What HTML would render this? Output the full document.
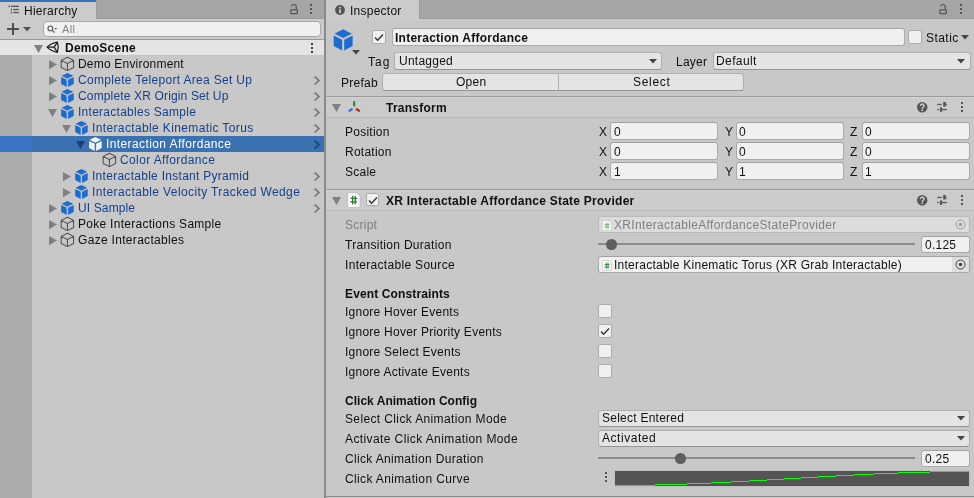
<!DOCTYPE html>
<html><head><meta charset="utf-8">
<style>
*{box-sizing:border-box;margin:0;padding:0}
html,body{width:974px;height:498px;overflow:hidden;background:#c8c8c8}
body{position:relative;font-family:"Liberation Sans",sans-serif;font-size:12px;color:#101010}
#root{position:absolute;left:0;top:0;width:974px;height:498px;will-change:transform}
.a{position:absolute}
.t{position:absolute;white-space:pre;line-height:16px;font-size:12px;letter-spacing:0.25px}
.b{font-weight:bold}
.blue{color:#13418f}
.fld{position:absolute;background:#f0f0f0;border:1px solid #aaaaaa;border-top-color:#a2a2a2;border-radius:3px}
.btn{position:absolute;background:#e4e4e4;border:1px solid #b0b0b0;border-bottom-color:#959595;border-radius:3px}
.cb{position:absolute;width:14px;height:14px;background:#f0f0f0;border:1px solid #ababab;border-radius:2px}
.sep{position:absolute;left:326px;width:648px;height:1px;background:#999}
</style></head><body><div id="root">
<svg width="0" height="0" style="position:absolute">
 <defs>
  <g id="cubeB" fill="#1b6bd2"><path d="M7.4 0.9L13.2 3.8L7.4 6.7L1.6 3.8Z"/><path d="M1.1 5L6.7 7.8V15L1.1 12Z"/><path d="M13.7 5L8.1 7.8V15L13.7 12Z"/></g>
  <g id="cubeW" fill="#f2f2f2"><path d="M7.4 0.9L13.2 3.8L7.4 6.7L1.6 3.8Z"/><path d="M1.1 5L6.7 7.8V15L1.1 12Z"/><path d="M13.7 5L8.1 7.8V15L13.7 12Z"/></g>
  <g id="cubeO"><path d="M7.4 1.3L13.6 4.4V11.5L7.4 14.6 1.2 11.5V4.4Z M1.2 4.4L7.4 7.5L13.6 4.4M7.4 7.5V14.6" fill="none" stroke="#505050" stroke-width="1.05" stroke-linejoin="round"/></g>
 </defs>
</svg>

<div class="a" style="left:0;top:0;width:974px;height:19px;background:#a5a5a5"></div>
<div class="a" style="left:0;top:0;width:96px;height:19px;background:#cbcbcb"></div>
<div class="a" style="left:0;top:0;width:96px;height:2px;background:#3a70bc"></div>
<div class="a" style="left:326px;top:0;width:93px;height:19px;background:#cbcbcb"></div>
<div class="a" style="left:96px;top:18px;width:230px;height:1px;background:#9c9c9c"></div>
<div class="a" style="left:419px;top:18px;width:555px;height:1px;background:#9c9c9c"></div>
<div class="a" style="left:96px;top:0;width:1px;height:19px;background:#9e9e9e"></div>
<div class="a" style="left:419px;top:0;width:1px;height:19px;background:#9e9e9e"></div>
<svg class="a" style="left:4px;top:2px" width="16" height="14" viewBox="0 0 16 14"><g fill="#555">
<path d="M4.2 4.3L5.8 2.9V5.7Z"/><rect x="7" y="3.7" width="7.8" height="1.3"/>
<path d="M6.4 7.5L8 6.2V8.9Z"/><rect x="9.2" y="6.9" width="5.6" height="1.3"/>
<path d="M6.4 10.5L8 9.2V11.9Z"/><rect x="9.2" y="9.9" width="5.6" height="1.3"/>
<rect x="7.1" y="5.5" width="0.6" height="5" fill="#888"/></g></svg>
<div class="t " style="left:24px;top:3px;">Hierarchy</div>
<svg class="a" style="left:289px;top:3px" width="11" height="12" viewBox="0 0 11 12"><path d="M7.3 6.5V4A2.5 2.5 0 0 0 2.4 3.3" fill="none" stroke="#555" stroke-width="1.2"/><rect x="1.8" y="6.9" width="6.6" height="3.7" rx="0.5" fill="none" stroke="#555" stroke-width="1.2"/></svg>
<svg class="a" style="left:310px;top:4px" width="2" height="10" viewBox="0 0 2 10"><g fill="#555"><rect x="0" y="0" width="2" height="2"/><rect x="0" y="4" width="2" height="2"/><rect x="0" y="8" width="2" height="2"/></g></svg>
<svg class="a" style="left:335px;top:5px" width="10" height="10" viewBox="0 0 10 10"><circle cx="5" cy="5" r="4.9" fill="#555"/><rect x="4.1" y="4.2" width="1.8" height="4" fill="#cbcbcb"/><rect x="4.1" y="1.8" width="1.8" height="1.6" fill="#cbcbcb"/></svg>
<div class="t " style="left:350px;top:3px;">Inspector</div>
<svg class="a" style="left:938px;top:3px" width="11" height="12" viewBox="0 0 11 12"><path d="M7.3 6.5V4A2.5 2.5 0 0 0 2.4 3.3" fill="none" stroke="#555" stroke-width="1.2"/><rect x="1.8" y="6.9" width="6.6" height="3.7" rx="0.5" fill="none" stroke="#555" stroke-width="1.2"/></svg>
<svg class="a" style="left:960px;top:4px" width="2" height="10" viewBox="0 0 2 10"><g fill="#555"><rect x="0" y="0" width="2" height="2"/><rect x="0" y="4" width="2" height="2"/><rect x="0" y="8" width="2" height="2"/></g></svg>
<div class="a" style="left:0;top:19px;width:324px;height:20px;background:#cbcbcb"></div>
<div class="a" style="left:0;top:39px;width:324px;height:1px;background:#999"></div>
<svg class="a" style="left:7px;top:23px" width="12" height="12" viewBox="0 0 12 12"><g fill="#444"><rect x="5.1" y="0" width="1.8" height="12"/><rect x="0" y="5.1" width="12" height="1.8"/></g></svg>
<svg class="a" style="left:23px;top:27px" width="8" height="5" viewBox="0 0 8 5"><path d="M0 0H8L4 4.6Z" fill="#555"/></svg>
<div class="fld" style="left:43px;top:21px;width:278px;height:16px;border-radius:4px;border-color:#a8a8a8"></div>
<svg class="a" style="left:47px;top:25px" width="11" height="9" viewBox="0 0 11 9"><circle cx="3.4" cy="3.4" r="2.4" fill="none" stroke="#555" stroke-width="1.1"/><path d="M5.1 5.2L7.6 7.7" stroke="#555" stroke-width="1.2"/><path d="M7.5 2.9H10L8.75 4.8Z" fill="#555"/></svg>
<div class="t " style="left:62px;top:20.5px;color:#858585;font-size:11px;letter-spacing:0.3px">All</div>
<div class="a" style="left:0;top:40px;width:324px;height:15px;background:#e4e4e4"></div>
<div class="a" style="left:0;top:55px;width:324px;height:1px;background:#c4c4c4"></div>
<div class="a" style="left:0;top:55px;width:32px;height:443px;background:#acacac"></div>
<div class="a" style="left:0;top:136px;width:32px;height:16px;background:#3b74c6"></div>
<div class="a" style="left:32px;top:136px;width:292px;height:16px;background:#3a71b1"></div>
<svg class="a" style="left:34px;top:45px" width="9" height="8" viewBox="0 0 9 8"><path d="M0 0H9L4.5 8Z" fill="#808080"/></svg>
<svg class="a" style="left:44px;top:39px" width="16" height="16" viewBox="0 0 16 16"><g fill="none" stroke="#222" stroke-width="1.25" stroke-linejoin="round"><path d="M3.1 8.2Q6.6 4.3 13.4 3.1Q15.1 8.2 13.4 13.3Q6.6 12.1 3.1 8.2Z"/><path d="M3.1 8.2H10.2L13.4 3.1M10.2 8.2L13.4 13.3"/></g></svg>
<div class="t b" style="left:65px;top:40px;">DemoScene</div>
<svg class="a" style="left:311px;top:43px" width="2" height="10" viewBox="0 0 2 10"><g fill="#444"><rect x="0" y="0" width="2" height="2"/><rect x="0" y="4" width="2" height="2"/><rect x="0" y="8" width="2" height="2"/></g></svg>
<svg class="a" style="left:49px;top:60px" width="8" height="10" viewBox="0 0 8 10"><path d="M0 0L8 4.6L0 9.2Z" fill="#808080"/></svg>
<svg class="a" style="left:60px;top:56px" width="15" height="16" viewBox="0 0 15 16"><use href="#cubeO"/></svg>
<div class="t " style="left:78px;top:56px;letter-spacing:0.2px">Demo Environment</div>
<svg class="a" style="left:49px;top:76px" width="8" height="10" viewBox="0 0 8 10"><path d="M0 0L8 4.6L0 9.2Z" fill="#808080"/></svg>
<svg class="a" style="left:60px;top:72px" width="15" height="16" viewBox="0 0 15 16"><use href="#cubeB"/></svg>
<div class="t blue" style="left:78px;top:72px;letter-spacing:0.31px">Complete Teleport Area Set Up</div>
<svg class="a" style="left:313px;top:76px" width="8" height="10" viewBox="0 0 8 10"><path d="M1.5 0.5L6 4.6L1.5 8.7" fill="none" stroke="#7a7a7a" stroke-width="1.7"/></svg>
<svg class="a" style="left:49px;top:92px" width="8" height="10" viewBox="0 0 8 10"><path d="M0 0L8 4.6L0 9.2Z" fill="#808080"/></svg>
<svg class="a" style="left:60px;top:88px" width="15" height="16" viewBox="0 0 15 16"><use href="#cubeB"/></svg>
<div class="t blue" style="left:78px;top:88px;letter-spacing:0.15px">Complete XR Origin Set Up</div>
<svg class="a" style="left:313px;top:92px" width="8" height="10" viewBox="0 0 8 10"><path d="M1.5 0.5L6 4.6L1.5 8.7" fill="none" stroke="#7a7a7a" stroke-width="1.7"/></svg>
<svg class="a" style="left:48px;top:109px" width="9" height="8" viewBox="0 0 9 8"><path d="M0 0H9L4.5 8Z" fill="#808080"/></svg>
<svg class="a" style="left:60px;top:104px" width="15" height="16" viewBox="0 0 15 16"><use href="#cubeB"/></svg>
<div class="t blue" style="left:78px;top:104px;letter-spacing:0.27px">Interactables Sample</div>
<svg class="a" style="left:313px;top:108px" width="8" height="10" viewBox="0 0 8 10"><path d="M1.5 0.5L6 4.6L1.5 8.7" fill="none" stroke="#7a7a7a" stroke-width="1.7"/></svg>
<svg class="a" style="left:62px;top:125px" width="9" height="8" viewBox="0 0 9 8"><path d="M0 0H9L4.5 8Z" fill="#808080"/></svg>
<svg class="a" style="left:74px;top:120px" width="15" height="16" viewBox="0 0 15 16"><use href="#cubeB"/></svg>
<div class="t blue" style="left:92px;top:120px;letter-spacing:0.37px">Interactable Kinematic Torus</div>
<svg class="a" style="left:313px;top:124px" width="8" height="10" viewBox="0 0 8 10"><path d="M1.5 0.5L6 4.6L1.5 8.7" fill="none" stroke="#7a7a7a" stroke-width="1.7"/></svg>
<svg class="a" style="left:76px;top:141px" width="9" height="8" viewBox="0 0 9 8"><path d="M0 0H9L4.5 8Z" fill="#1e3e6c"/></svg>
<svg class="a" style="left:88px;top:136px" width="15" height="16" viewBox="0 0 15 16"><use href="#cubeW"/></svg>
<div class="t " style="left:106px;top:136px;color:#ffffff;letter-spacing:0.4px">Interaction Affordance</div>
<svg class="a" style="left:313px;top:140px" width="8" height="10" viewBox="0 0 8 10"><path d="M1.5 0.5L6 4.6L1.5 8.7" fill="none" stroke="#1f4474" stroke-width="1.7"/></svg>
<svg class="a" style="left:102px;top:152px" width="15" height="16" viewBox="0 0 15 16"><use href="#cubeO"/></svg>
<div class="t blue" style="left:120px;top:152px;letter-spacing:0.38px">Color Affordance</div>
<svg class="a" style="left:63px;top:172px" width="8" height="10" viewBox="0 0 8 10"><path d="M0 0L8 4.6L0 9.2Z" fill="#808080"/></svg>
<svg class="a" style="left:74px;top:168px" width="15" height="16" viewBox="0 0 15 16"><use href="#cubeB"/></svg>
<div class="t blue" style="left:92px;top:168px;letter-spacing:0.28px">Interactable Instant Pyramid</div>
<svg class="a" style="left:313px;top:172px" width="8" height="10" viewBox="0 0 8 10"><path d="M1.5 0.5L6 4.6L1.5 8.7" fill="none" stroke="#7a7a7a" stroke-width="1.7"/></svg>
<svg class="a" style="left:63px;top:188px" width="8" height="10" viewBox="0 0 8 10"><path d="M0 0L8 4.6L0 9.2Z" fill="#808080"/></svg>
<svg class="a" style="left:74px;top:184px" width="15" height="16" viewBox="0 0 15 16"><use href="#cubeB"/></svg>
<div class="t blue" style="left:92px;top:184px;letter-spacing:0.39px">Interactable Velocity Tracked Wedge</div>
<svg class="a" style="left:313px;top:188px" width="8" height="10" viewBox="0 0 8 10"><path d="M1.5 0.5L6 4.6L1.5 8.7" fill="none" stroke="#7a7a7a" stroke-width="1.7"/></svg>
<svg class="a" style="left:49px;top:204px" width="8" height="10" viewBox="0 0 8 10"><path d="M0 0L8 4.6L0 9.2Z" fill="#808080"/></svg>
<svg class="a" style="left:60px;top:200px" width="15" height="16" viewBox="0 0 15 16"><use href="#cubeB"/></svg>
<div class="t blue" style="left:78px;top:200px;letter-spacing:0.125px">UI Sample</div>
<svg class="a" style="left:313px;top:204px" width="8" height="10" viewBox="0 0 8 10"><path d="M1.5 0.5L6 4.6L1.5 8.7" fill="none" stroke="#7a7a7a" stroke-width="1.7"/></svg>
<svg class="a" style="left:49px;top:220px" width="8" height="10" viewBox="0 0 8 10"><path d="M0 0L8 4.6L0 9.2Z" fill="#808080"/></svg>
<svg class="a" style="left:60px;top:216px" width="15" height="16" viewBox="0 0 15 16"><use href="#cubeO"/></svg>
<div class="t " style="left:78px;top:216px;letter-spacing:0.28px">Poke Interactions Sample</div>
<svg class="a" style="left:49px;top:236px" width="8" height="10" viewBox="0 0 8 10"><path d="M0 0L8 4.6L0 9.2Z" fill="#808080"/></svg>
<svg class="a" style="left:60px;top:232px" width="15" height="16" viewBox="0 0 15 16"><use href="#cubeO"/></svg>
<div class="t " style="left:78px;top:232px;letter-spacing:0.31px">Gaze Interactables</div>
<div class="a" style="left:324px;top:0;width:2px;height:498px;background:#8a8a8a"></div>
<svg class="a" style="left:332px;top:28px" width="22.6" height="24" viewBox="0 0 15 16"><use href="#cubeB"/></svg>
<svg class="a" style="left:352px;top:50px" width="8" height="5" viewBox="0 0 8 5"><path d="M0 0H8L4 4.6Z" fill="#444"/></svg>
<div class="cb" style="left:372px;top:30px"></div>
<svg class="a" style="left:374px;top:33px" width="10" height="9" viewBox="0 0 10 9"><path d="M1 4.6l2.6 2.6L9 1.6" fill="none" stroke="#333" stroke-width="1.4"/></svg>
<div class="fld" style="left:392px;top:28px;width:513px;height:18px"></div>
<div class="t b" style="left:395px;top:30px;">Interaction Affordance</div>
<div class="cb" style="left:908px;top:30px"></div>
<div class="t " style="left:926px;top:30px;letter-spacing:0.45px">Static</div>
<svg class="a" style="left:961px;top:35px" width="8" height="5" viewBox="0 0 8 5"><path d="M0 0H8L4 4.6Z" fill="#444"/></svg>
<div class="t " style="left:368px;top:54px;letter-spacing:1px">Tag</div>
<div class="btn" style="left:394px;top:52px;width:268px;height:18px"></div>
<div class="t " style="left:399px;top:53px;">Untagged</div>
<svg class="a" style="left:649px;top:59px" width="8" height="5" viewBox="0 0 8 5"><path d="M0 0H8L4 4.6Z" fill="#444"/></svg>
<div class="t " style="left:676px;top:54px;">Layer</div>
<div class="btn" style="left:713px;top:52px;width:258px;height:18px"></div>
<div class="t " style="left:716px;top:53px;letter-spacing:0.4px">Default</div>
<svg class="a" style="left:957px;top:59px" width="8" height="5" viewBox="0 0 8 5"><path d="M0 0H8L4 4.6Z" fill="#444"/></svg>
<div class="t " style="left:341px;top:75px;">Prefab</div>
<div class="btn" style="left:382px;top:73px;width:177px;height:18px;border-radius:3px 0 0 3px"></div>
<div class="btn" style="left:558px;top:73px;width:186px;height:18px;border-radius:0 3px 3px 0"></div>
<div class="t " style="left:456px;top:74px;">Open</div>
<div class="t " style="left:633px;top:74px;letter-spacing:0.7px">Select</div>
<div class="sep" style="top:96px"></div>
<div class="a" style="left:326px;top:97px;width:648px;height:20px;background:#cbcbcb"></div>
<div class="a" style="left:326px;top:97px;width:648px;height:1px;background:#d3d3d3"></div>
<div class="sep" style="top:117px;background:#b8b8b8"></div>
<svg class="a" style="left:332px;top:104px" width="9" height="8" viewBox="0 0 9 8"><path d="M0 0H9L4.5 8Z" fill="#808080"/></svg>
<svg class="a" style="left:347px;top:100px" width="14" height="13" viewBox="0 0 14 13"><g stroke-width="2.2" stroke-linecap="round"><path d="M7.2 2.1V5.4" stroke="#2a8a34"/><path d="M2.4 10.7L4.8 9.3" stroke="#1e6fe0"/><path d="M9.6 9.3L12.1 10.7" stroke="#c81c1c"/></g></svg>
<div class="t b" style="left:386px;top:100px;">Transform</div>
<svg class="a" style="left:917px;top:102px" width="11" height="11" viewBox="0 0 11 11"><circle cx="5.2" cy="5.2" r="5.2" fill="#555"/><path d="M3.4 4.1A1.8 1.8 0 1 1 5.9 5.6C5.3 5.9 5.2 6.2 5.2 6.9" fill="none" stroke="#cbcbcb" stroke-width="1.5"/><rect x="4.4" y="7.6" width="1.6" height="1.5" fill="#cbcbcb"/></svg>
<svg class="a" style="left:937px;top:101px" width="10" height="11" viewBox="0 0 10 11"><g fill="#555"><rect x="0.3" y="2.8" width="4.3" height="1.3"/><rect x="6.2" y="1" width="2.6" height="4.5"/><rect x="8.8" y="2.8" width="1" height="1.3"/><rect x="0.3" y="7.9" width="1.6" height="1.3"/><rect x="2.9" y="6.5" width="2.3" height="4.3"/><rect x="5.2" y="7.9" width="4.6" height="1.3"/></g></svg>
<svg class="a" style="left:961px;top:102px" width="2" height="10" viewBox="0 0 2 10"><g fill="#555"><rect x="0" y="0" width="2" height="2"/><rect x="0" y="4" width="2" height="2"/><rect x="0" y="8" width="2" height="2"/></g></svg>
<div class="t " style="left:345px;top:124px;">Position</div>
<div class="t " style="left:345px;top:144px;">Rotation</div>
<div class="t " style="left:345px;top:164px;">Scale</div>
<div class="t " style="left:599px;top:124px;">X</div>
<div class="fld" style="left:610px;top:122px;width:108px;height:18px"></div>
<div class="t " style="left:614px;top:124px;">0</div>
<div class="t " style="left:725px;top:124px;">Y</div>
<div class="fld" style="left:736px;top:122px;width:108px;height:18px"></div>
<div class="t " style="left:739px;top:124px;">0</div>
<div class="t " style="left:850px;top:124px;">Z</div>
<div class="fld" style="left:862px;top:122px;width:108px;height:18px"></div>
<div class="t " style="left:865px;top:124px;">0</div>
<div class="t " style="left:599px;top:144px;">X</div>
<div class="fld" style="left:610px;top:142px;width:108px;height:18px"></div>
<div class="t " style="left:614px;top:144px;">0</div>
<div class="t " style="left:725px;top:144px;">Y</div>
<div class="fld" style="left:736px;top:142px;width:108px;height:18px"></div>
<div class="t " style="left:739px;top:144px;">0</div>
<div class="t " style="left:850px;top:144px;">Z</div>
<div class="fld" style="left:862px;top:142px;width:108px;height:18px"></div>
<div class="t " style="left:865px;top:144px;">0</div>
<div class="t " style="left:599px;top:164px;">X</div>
<div class="fld" style="left:610px;top:162px;width:108px;height:18px"></div>
<div class="t " style="left:614px;top:164px;">1</div>
<div class="t " style="left:725px;top:164px;">Y</div>
<div class="fld" style="left:736px;top:162px;width:108px;height:18px"></div>
<div class="t " style="left:739px;top:164px;">1</div>
<div class="t " style="left:850px;top:164px;">Z</div>
<div class="fld" style="left:862px;top:162px;width:108px;height:18px"></div>
<div class="t " style="left:865px;top:164px;">1</div>
<div class="sep" style="top:189px"></div>
<div class="a" style="left:326px;top:190px;width:648px;height:20px;background:#cbcbcb"></div>
<div class="a" style="left:326px;top:190px;width:648px;height:1px;background:#d3d3d3"></div>
<div class="sep" style="top:210px;background:#b8b8b8"></div>
<svg class="a" style="left:332px;top:197px" width="9" height="8" viewBox="0 0 9 8"><path d="M0 0H9L4.5 8Z" fill="#808080"/></svg>
<svg class="a" style="left:347px;top:192px" width="14" height="16" viewBox="0 0 14 16"><path d="M1.5 0.8H9.5L13 4.3V14.6A0.8 0.8 0 0 1 12.2 15.4H1.5A0.8 0.8 0 0 1 0.7 14.6V1.6A0.8 0.8 0 0 1 1.5 0.8Z" fill="#fbfbfb" stroke="#b9b9b9" stroke-width="0.8"/><g fill="#2d7d32"><rect x="3.5" y="5.7" width="6.8" height="1.3"/><rect x="3.2" y="9.2" width="6.8" height="1.3"/><rect x="5" y="3.8" width="1.3" height="8.6"/><rect x="7.6" y="3.8" width="1.3" height="8.6"/></g></svg>
<div class="cb" style="left:366px;top:193px;width:13px;height:13px"></div>
<svg class="a" style="left:368px;top:196px" width="10" height="9" viewBox="0 0 10 9"><path d="M1 4.6l2.6 2.6L9 1.6" fill="none" stroke="#333" stroke-width="1.4"/></svg>
<div class="t b" style="left:386px;top:193px;">XR Interactable Affordance State Provider</div>
<svg class="a" style="left:917px;top:195px" width="11" height="11" viewBox="0 0 11 11"><circle cx="5.2" cy="5.2" r="5.2" fill="#555"/><path d="M3.4 4.1A1.8 1.8 0 1 1 5.9 5.6C5.3 5.9 5.2 6.2 5.2 6.9" fill="none" stroke="#cbcbcb" stroke-width="1.5"/><rect x="4.4" y="7.6" width="1.6" height="1.5" fill="#cbcbcb"/></svg>
<svg class="a" style="left:937px;top:194px" width="10" height="11" viewBox="0 0 10 11"><g fill="#555"><rect x="0.3" y="2.8" width="4.3" height="1.3"/><rect x="6.2" y="1" width="2.6" height="4.5"/><rect x="8.8" y="2.8" width="1" height="1.3"/><rect x="0.3" y="7.9" width="1.6" height="1.3"/><rect x="2.9" y="6.5" width="2.3" height="4.3"/><rect x="5.2" y="7.9" width="4.6" height="1.3"/></g></svg>
<svg class="a" style="left:961px;top:195px" width="2" height="10" viewBox="0 0 2 10"><g fill="#555"><rect x="0" y="0" width="2" height="2"/><rect x="0" y="4" width="2" height="2"/><rect x="0" y="8" width="2" height="2"/></g></svg>
<div class="t " style="left:345px;top:217px;color:#7e7e7e">Script</div>
<div class="fld" style="left:598px;top:216px;width:372px;height:17px;background:#dcdcdc;border-color:#bababa"></div>
<svg class="a" style="left:602px;top:220px" width="10" height="11" viewBox="0 0 10 11"><path d="M0.9 0.5H7L9.5 3V10.1A0.5 0.5 0 0 1 9 10.6H0.9A0.5 0.5 0 0 1 0.4 10.1V1A0.5 0.5 0 0 1 0.9 0.5Z" fill="#fafafa" stroke="#c4c4c4" stroke-width="0.7"/><g fill="#79a97c"><rect x="2.6" y="4" width="5" height="0.9"/><rect x="2.3" y="6.5" width="5" height="0.9"/><rect x="3.8" y="2.6" width="0.9" height="6.2"/><rect x="5.6" y="2.6" width="0.9" height="6.2"/></g></svg>
<div class="t " style="left:614px;top:217px;color:#808080;letter-spacing:0.345px">XRInteractableAffordanceStateProvider</div>
<svg class="a" style="left:955px;top:219px" width="11" height="11" viewBox="0 0 11 11"><circle cx="5.5" cy="5.5" r="4.5" fill="none" stroke="#9a9a9a" stroke-width="1"/><circle cx="5.5" cy="5.5" r="1.7" fill="#9a9a9a"/></svg>
<div class="t " style="left:345px;top:237px;letter-spacing:0.30px">Transition Duration</div>
<div class="a" style="left:598px;top:243px;width:317px;height:2px;background:#8c8c8c"></div>
<div class="a" style="left:606px;top:239px;width:10.5px;height:10.5px;border-radius:50%;background:#5f5f5f"></div>
<div class="fld" style="left:921px;top:236px;width:49px;height:17px"></div>
<div class="t " style="left:925px;top:237px;">0.125</div>
<div class="t " style="left:345px;top:257px;letter-spacing:0.31px">Interactable Source</div>
<div class="fld" style="left:598px;top:256px;width:372px;height:17px"></div>
<div class="a" style="left:952px;top:257px;width:17px;height:15px;background:#dedede;border-radius:0 2px 2px 0"></div>
<svg class="a" style="left:602px;top:260px" width="10" height="11" viewBox="0 0 10 11"><path d="M0.9 0.5H7L9.5 3V10.1A0.5 0.5 0 0 1 9 10.6H0.9A0.5 0.5 0 0 1 0.4 10.1V1A0.5 0.5 0 0 1 0.9 0.5Z" fill="#fafafa" stroke="#c4c4c4" stroke-width="0.7"/><g fill="#2f8a3a"><rect x="2.6" y="4" width="5" height="0.9"/><rect x="2.3" y="6.5" width="5" height="0.9"/><rect x="3.8" y="2.6" width="0.9" height="6.2"/><rect x="5.6" y="2.6" width="0.9" height="6.2"/></g></svg>
<div class="t " style="left:614px;top:257px;">Interactable Kinematic Torus (XR Grab Interactable)</div>
<svg class="a" style="left:955px;top:259px" width="11" height="11" viewBox="0 0 11 11"><circle cx="5.5" cy="5.5" r="4.5" fill="none" stroke="#444" stroke-width="1"/><circle cx="5.5" cy="5.5" r="1.7" fill="#444"/></svg>
<div class="t b" style="left:345px;top:286px;letter-spacing:0.125px">Event Constraints</div>
<div class="t " style="left:345px;top:304px;">Ignore Hover Events</div>
<div class="cb" style="left:598px;top:304px"></div>
<div class="t " style="left:345px;top:324px;">Ignore Hover Priority Events</div>
<div class="cb" style="left:598px;top:324px"></div>
<svg class="a" style="left:600px;top:327px" width="10" height="9" viewBox="0 0 10 9"><path d="M1 4.6l2.6 2.6L9 1.6" fill="none" stroke="#333" stroke-width="1.4"/></svg>
<div class="t " style="left:345px;top:344px;">Ignore Select Events</div>
<div class="cb" style="left:598px;top:344px"></div>
<div class="t " style="left:345px;top:364px;">Ignore Activate Events</div>
<div class="cb" style="left:598px;top:364px"></div>
<div class="t b" style="left:345px;top:393px;letter-spacing:0.02px">Click Animation Config</div>
<div class="t " style="left:345px;top:411px;letter-spacing:0.37px">Select Click Animation Mode</div>
<div class="btn" style="left:598px;top:410px;width:372px;height:17px"></div>
<div class="t " style="left:602px;top:410px;">Select Entered</div>
<svg class="a" style="left:957px;top:416px" width="8" height="5" viewBox="0 0 8 5"><path d="M0 0H8L4 4.6Z" fill="#444"/></svg>
<div class="t " style="left:345px;top:431px;letter-spacing:0.40px">Activate Click Animation Mode</div>
<div class="btn" style="left:598px;top:430px;width:372px;height:17px"></div>
<div class="t " style="left:602px;top:430px;letter-spacing:0.55px">Activated</div>
<svg class="a" style="left:957px;top:436px" width="8" height="5" viewBox="0 0 8 5"><path d="M0 0H8L4 4.6Z" fill="#444"/></svg>
<div class="t " style="left:345px;top:451px;letter-spacing:0.33px">Click Animation Duration</div>
<div class="a" style="left:598px;top:457px;width:317px;height:2px;background:#8c8c8c"></div>
<div class="a" style="left:675px;top:453px;width:10.5px;height:10.5px;border-radius:50%;background:#5f5f5f"></div>
<div class="fld" style="left:921px;top:450px;width:49px;height:17px"></div>
<div class="t " style="left:925px;top:451px;">0.25</div>
<div class="t " style="left:345px;top:471px;letter-spacing:0.36px">Click Animation Curve</div>
<svg class="a" style="left:605px;top:472px" width="2" height="10" viewBox="0 0 2 10"><g fill="#555"><rect x="0" y="0" width="2" height="2"/><rect x="0" y="4" width="2" height="2"/><rect x="0" y="8" width="2" height="2"/></g></svg>
<div class="a" style="left:614px;top:470px;width:356px;height:17px;background:#c0c0c0;border-radius:1px"></div>
<div class="a" style="left:615px;top:471px;width:354px;height:15px;background:#545454"></div>
<div class="a" style="left:615px;top:485px;width:40px;height:1px;background:#08ff08"></div>
<div class="a" style="left:655px;top:484px;width:32px;height:1px;background:#08ff08"></div>
<div class="a" style="left:687px;top:483px;width:24px;height:1px;background:#08ff08"></div>
<div class="a" style="left:711px;top:482px;width:20px;height:1px;background:#08ff08"></div>
<div class="a" style="left:731px;top:481px;width:18px;height:1px;background:#08ff08"></div>
<div class="a" style="left:749px;top:480px;width:18px;height:1px;background:#08ff08"></div>
<div class="a" style="left:767px;top:479px;width:17px;height:1px;background:#08ff08"></div>
<div class="a" style="left:784px;top:478px;width:17px;height:1px;background:#08ff08"></div>
<div class="a" style="left:801px;top:477px;width:17px;height:1px;background:#08ff08"></div>
<div class="a" style="left:818px;top:476px;width:18px;height:1px;background:#08ff08"></div>
<div class="a" style="left:836px;top:475px;width:18px;height:1px;background:#08ff08"></div>
<div class="a" style="left:854px;top:474px;width:20px;height:1px;background:#08ff08"></div>
<div class="a" style="left:874px;top:473px;width:24px;height:1px;background:#08ff08"></div>
<div class="a" style="left:898px;top:472px;width:32px;height:1px;background:#08ff08"></div>
<div class="a" style="left:930px;top:471px;width:39px;height:1px;background:#08ff08"></div>
<div class="a" style="left:326px;top:496px;width:648px;height:1px;background:#8a8a8a"></div>
</div></body></html>
